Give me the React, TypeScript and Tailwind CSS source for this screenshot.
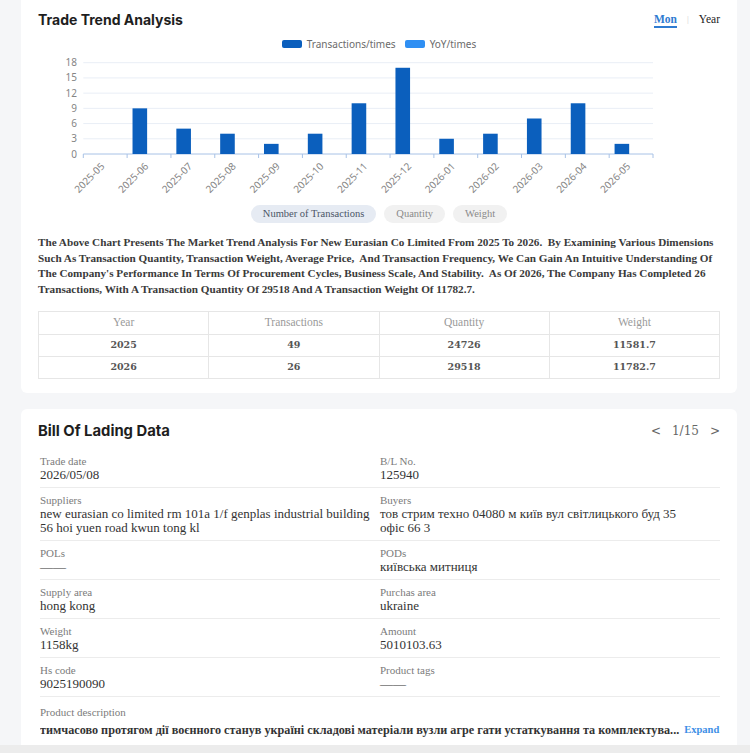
import React from "react";

const serif = "font-['Liberation_Serif',serif]";
const wideSerif = "font-['DejaVu_Serif',serif]";
const sans = "font-['Inter','Liberation_Sans',sans-serif]";

const months = [
  "2025-05", "2025-06", "2025-07", "2025-08", "2025-09", "2025-10", "2025-11",
  "2025-12", "2026-01", "2026-02", "2026-03", "2026-04", "2026-05",
];
const counts = [0, 9, 5, 4, 2, 4, 10, 17, 3, 4, 7, 10, 2];

// plot geometry (page coordinates; the svg is shifted by its own offset)
const X0 = 83.3;
const X1 = 653;
const STEP = (X1 - X0) / 13;
const Y0 = 154;
const UNIT = (154 - 62.7) / 18;
const OX = 38;
const OY = 51;

function TrendChart() {
  const yTicks = [0, 3, 6, 9, 12, 15, 18];
  return (
    <svg width={683} height={146} className="block">
      <g transform={`translate(${-OX}, ${-OY})`}>
        {yTicks.map((t) => {
          const y = Y0 - t * UNIT;
          return (
            <g key={t}>
              {t > 0 && (
                <line x1={X0} x2={X1} y1={y} y2={y} stroke="#e9eef6" strokeWidth={1} />
              )}
              <text
                x={77}
                y={y + 3.5}
                textAnchor="end"
                fontSize={10}
                fill="#858585"
                fontFamily="'Noto Sans', sans-serif"
              >
                {t}
              </text>
            </g>
          );
        })}
        <line x1={X0} x2={X1} y1={Y0} y2={Y0} stroke="#a8c2e6" strokeWidth={1} />
        {Array.from({ length: 14 }).map((_, i) => (
          <line
            key={i}
            x1={X0 + i * STEP}
            x2={X0 + i * STEP}
            y1={Y0}
            y2={Y0 + 4}
            stroke="#a8c2e6"
            strokeWidth={1}
          />
        ))}
        {counts.map((c, i) => {
          const h = c * UNIT;
          return c > 0 ? (
            <rect
              key={i}
              x={X0 + i * STEP + 5.4}
              y={Y0 - h}
              width={14.6}
              height={h}
              fill="#0b5fbd"
            />
          ) : null;
        })}
        {months.map((m, i) => {
          const cx = X0 + i * STEP + STEP / 2;
          return (
            <text
              key={m}
              x={cx}
              y={Y0 + 13}
              textAnchor="end"
              fontSize={10}
              fill="#858585"
              fontFamily="'Noto Sans', sans-serif"
              transform={`rotate(-45 ${cx} ${Y0 + 13})`}
            >
              {m}
            </text>
          );
        })}
      </g>
    </svg>
  );
}

const tableRows = [
  ["2025", "49", "24726", "11581.7"],
  ["2026", "26", "29518", "11782.7"],
];

function Field({
  label,
  children,
  valueClass = "",
}: {
  label: string;
  children: React.ReactNode;
  valueClass?: string;
}) {
  return (
    <div className="border-b border-[#ececec] pt-[5px] pb-[5px]">
      <div className={`${serif} text-[11px] leading-[14px] text-[#7b7b7b]`}>{label}</div>
      <div className={`${serif} text-[13px] leading-[14px] text-[#333] ${valueClass}`}>{children}</div>
    </div>
  );
}

export default function App() {
  return (
    <div className="min-h-[753px] bg-[#f5f6f8] pl-[21px] pr-[13px]">
      {/* Trade trend card */}
      <div className="rounded-b-[6px] bg-white px-[17px] pt-[10px] pb-[14px]">
        <div className="flex h-[20px] items-center justify-between">
          <h2 className={`${sans} text-[14px] font-bold leading-[20px] text-[#1e1e1e]`}>
            Trade Trend Analysis
          </h2>
          <div className={`${serif} flex items-center text-[11.5px]`}>
            <span className="relative font-bold text-[#2e7bd1]">
              Mon
              <span className="absolute left-0 right-0 top-[15px] h-[2px] bg-[#2e7bd1]" />
            </span>
            <span className="mx-[10px] text-[9px] text-[#d0d0d0]">|</span>
            <span className="text-[#222]">Year</span>
          </div>
        </div>

        <div className="mt-[7px] flex h-[14px] items-center justify-center gap-[9px] font-['Noto_Sans',sans-serif] text-[10px] text-[#6b6b6b]">
          <div className="flex items-center gap-[5px]">
            <span className="h-[8px] w-[20px] rounded-[2px] bg-[#0b5fbd]" />
            <span>Transactions/times</span>
          </div>
          <div className="flex items-center gap-[5px]">
            <span className="h-[8px] w-[20px] rounded-[2px] bg-[#2f8ff3]" />
            <span>YoY/times</span>
          </div>
        </div>

        <TrendChart />

        <div className={`${serif} mt-[8px] flex justify-center gap-[8px] text-[10.5px]`}>
          <span className="flex h-[18px] items-center rounded-full bg-[#e6ebf3] px-[12px] text-[#4b5566]">
            Number of Transactions
          </span>
          <span className="flex h-[18px] items-center rounded-full bg-[#f1f1f1] px-[12px] text-[#8a8a8a]">
            Quantity
          </span>
          <span className="flex h-[18px] items-center rounded-full bg-[#f1f1f1] px-[12px] text-[#8a8a8a]">
            Weight
          </span>
        </div>

        <p
          className={`${serif} mt-[12px] text-[11.2px] font-bold leading-[15.5px] text-[#3a3a3a]`}
        >
          The Above Chart Presents The Market Trend Analysis For New Eurasian Co Limited From 2025 To
          2026.&nbsp; By Examining Various Dimensions Such As Transaction Quantity, Transaction Weight,
          Average Price,&nbsp; And Transaction Frequency, We Can Gain An Intuitive Understanding Of
          <br />
          The Company's Performance In Terms Of Procurement Cycles, Business Scale, And Stability.&nbsp; As
          Of 2026, The Company Has Completed 26 Transactions, With A Transaction Quantity Of 29518 And A
          Transaction Weight Of 11782.7.
        </p>

        <table className="mt-[14px] w-full table-fixed border-collapse">
          <thead>
            <tr className="h-[23px]">
              {["Year", "Transactions", "Quantity", "Weight"].map((h) => (
                <th
                  key={h}
                  className={`${serif} border border-[#e6e6e6] text-[11.5px] font-normal text-[#9a9a9a]`}
                >
                  {h}
                </th>
              ))}
            </tr>
          </thead>
          <tbody>
            {tableRows.map((r) => (
              <tr key={r[0]} className="h-[22px]">
                {r.map((c, i) => (
                  <td
                    key={i}
                    className={`${wideSerif} border border-[#e6e6e6] text-center text-[9.5px] font-bold text-[#555]`}
                  >
                    {c}
                  </td>
                ))}
              </tr>
            ))}
          </tbody>
        </table>
      </div>

      {/* Bill of lading card */}
      <div className="mt-[16px] rounded-t-[6px] bg-white px-[17px] pt-[12px] pb-[20px]">
        <div className="flex h-[20px] items-center justify-between">
          <h2 className={`${sans} text-[14.8px] font-bold leading-[20px] text-[#1e1e1e]`}>
            Bill Of Lading Data
          </h2>
          <div className={`${wideSerif} flex items-center gap-[11px] text-[12px] text-[#666]`}>
            <span>&lt;</span>
            <span>1/15</span>
            <span>&gt;</span>
          </div>
        </div>

        <div className="mt-[8px] ml-[2px] grid grid-cols-2">
          <Field label="Trade date">2026/05/08</Field>
          <Field label="B/L No.">125940</Field>
          <Field label="Suppliers">
            new eurasian co limited rm 101a 1/f genplas industrial building 56 hoi yuen road kwun tong kl
          </Field>
          <Field label="Buyers" valueClass="pr-[22px]">
            тов стрим техно 04080 м київ вул світлицького буд 35 офіс 66 3
          </Field>
          <Field label="POLs">——</Field>
          <Field label="PODs">київська митниця</Field>
          <Field label="Supply area">hong kong</Field>
          <Field label="Purchas area">ukraine</Field>
          <Field label="Weight">1158kg</Field>
          <Field label="Amount">5010103.63</Field>
          <Field label="Hs code">9025190090</Field>
          <Field label="Product tags">——</Field>
          <div className="col-span-2 border-b border-[#ececec] pt-[8px] pb-[6px]">
            <div className={`${serif} text-[11px] leading-[14px] text-[#7b7b7b]`}>Product description</div>
            <div className="mt-[2px] flex items-center">
              <span className={`${serif} truncate text-[12.2px] font-bold leading-[16px] text-[#333]`}>
                тимчасово протягом дії воєнного станув україні складові матеріали вузли агре гати устаткування та комплектува
              </span>
              <span className={`${serif} shrink-0 text-[12.2px] font-bold text-[#333]`}>...</span>
              <span className={`${serif} ml-[5px] shrink-0 text-[10.5px] font-bold text-[#3d8fe6]`}>Expand</span>
            </div>
          </div>
        </div>
      </div>

      <div className="fixed bottom-0 left-0 right-0 h-[8px] bg-[#ececec]" />
    </div>
  );
}
